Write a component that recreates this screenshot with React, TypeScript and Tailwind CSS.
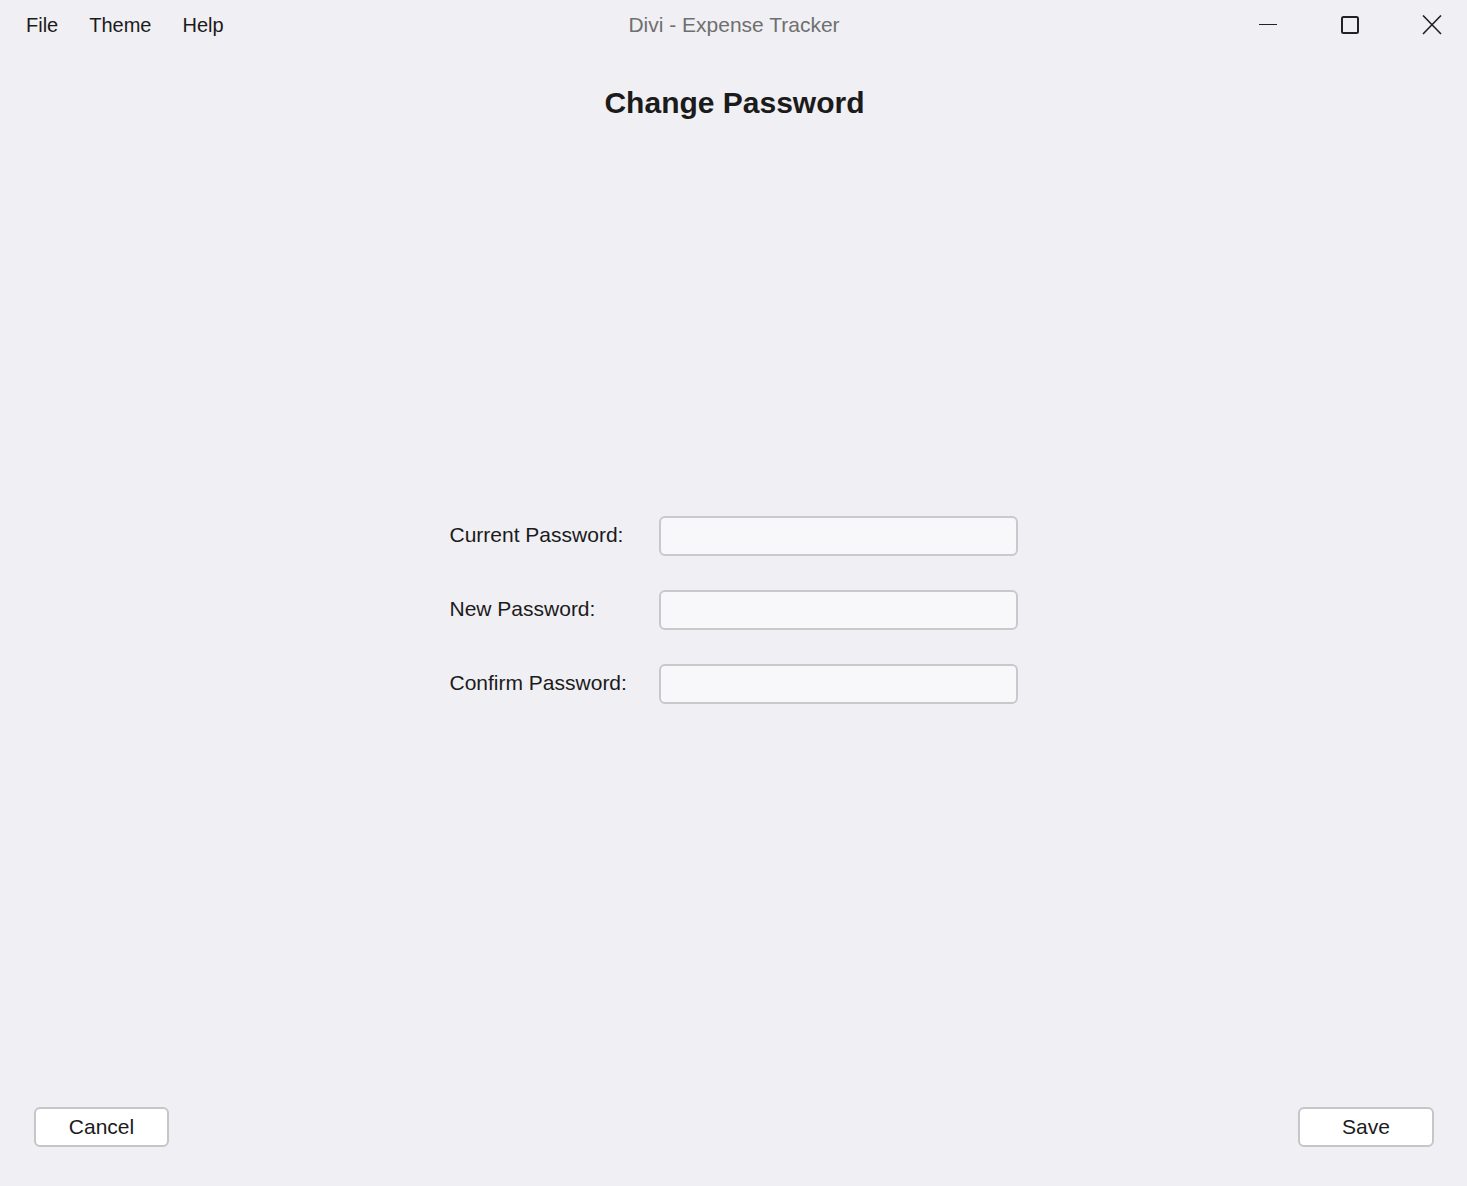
import React from 'react';

const font = { fontFamily: '"Liberation Sans", Arial, sans-serif' };

function TitleBar() {
  return (
    <div className="grid h-[50px] grid-cols-[1fr_auto_1fr] items-center">
      <nav className="flex items-center gap-[31px] pl-[26px] text-[20px] text-[#1b1b1b]">
        <span>File</span>
        <span>Theme</span>
        <span>Help</span>
      </nav>
      <div className="pl-[1px] text-[21px] text-[#6f6f6f]">Divi - Expense Tracker</div>
      <div className="flex items-center justify-end gap-[62px] pr-[25px] text-[#222]">
        <svg width="20" height="20" viewBox="0 0 20 20" fill="none" stroke="currentColor">
          <line x1="1" y1="9.5" x2="19" y2="9.5" strokeWidth="1" />
        </svg>
        <svg width="20" height="20" viewBox="0 0 20 20" fill="none" stroke="currentColor">
          <rect x="2" y="2" width="16" height="16" rx="1.5" strokeWidth="2" />
        </svg>
        <svg width="20" height="20" viewBox="0 0 20 20" fill="none" stroke="currentColor">
          <path d="M1 0.5 L19 19 M19 0.5 L1 19" strokeWidth="1.6" />
        </svg>
      </div>
    </div>
  );
}

function Field({ label }: { label: string }) {
  return (
    <div className="flex h-[40px] items-center">
      <label className="w-[209px] pb-[2px] text-[21px] text-[#1b1b1b]">{label}</label>
      <input
        type="password"
        className="h-[40px] w-[359px] rounded-[6px] border-2 border-[#c9c9cb] bg-[#f8f8fa] px-2 outline-none"
      />
    </div>
  );
}

export default function App() {
  return (
    <div className="flex h-[1186px] w-full flex-col bg-[#f0eff4]" style={font}>
      <TitleBar />

      <h1 className="mt-[35px] pl-[2px] text-center text-[30px] leading-[36px] font-bold text-[#1b1b1b]">
        Change Password
      </h1>

      <div className="mt-[395px] flex flex-col items-center">
        <div className="flex flex-col gap-[34px]">
          <Field label="Current Password:" />
          <Field label="New Password:" />
          <Field label="Confirm Password:" />
        </div>
      </div>

      <div className="flex-1" />

      <div className="flex items-center justify-between pl-[34px] pr-[33px] pb-[39px]">
        <button className="h-[40px] w-[135px] rounded-[6px] border-2 border-[#c6c6c8] bg-white pb-[1px] text-[21px] text-[#1b1b1b]">
          Cancel
        </button>
        <button className="h-[40px] w-[136px] rounded-[6px] border-2 border-[#c6c6c8] bg-white pb-[1px] text-[21px] text-[#1b1b1b]">
          Save
        </button>
      </div>
    </div>
  );
}
